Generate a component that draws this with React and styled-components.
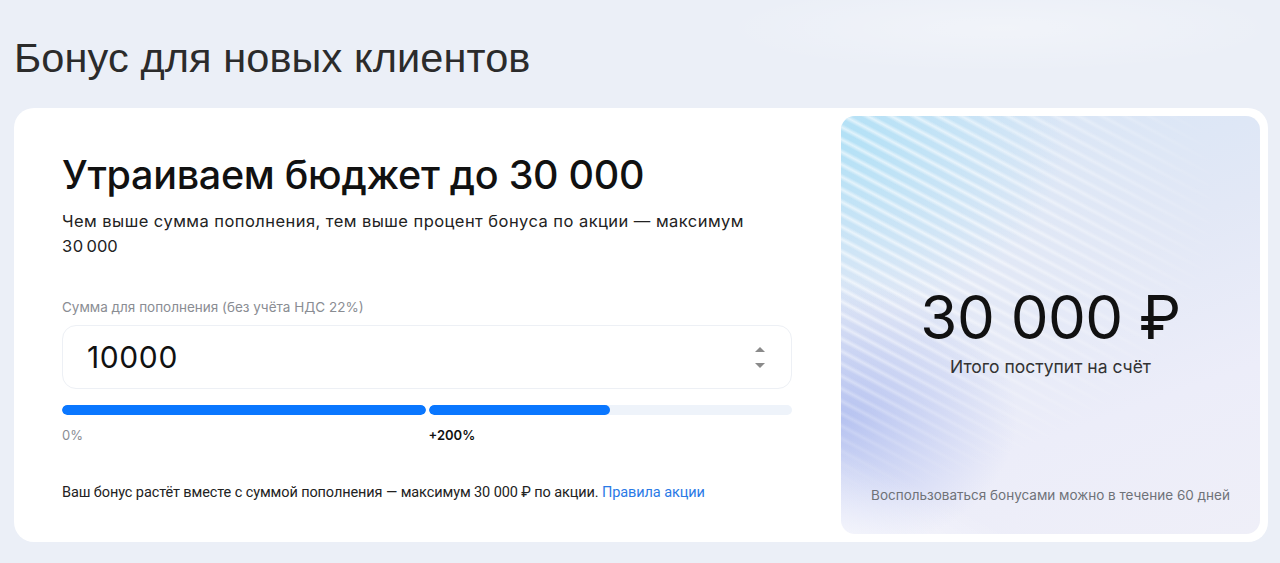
import React from "react";
import styled, { createGlobalStyle } from "styled-components";

const Global = createGlobalStyle`
  html, body { margin: 0; padding: 0; }
  body {
    background: #ebeff7;
    font-family: Inter, "Noto Sans", sans-serif;
    -webkit-font-smoothing: antialiased;
  }
`;

const Page = styled.div`
  position: relative;
  width: 1280px;
  height: 563px;
  box-sizing: border-box;
  padding: 0 12px 0 14px;
  overflow: hidden;
  background:
    radial-gradient(ellipse 380px 60px at 1000px 28px, rgba(255,255,255,0.3), rgba(255,255,255,0) 75%),
    #ebeff7;
`;

const Heading = styled.h1`
  margin: 0;
  padding-top: 31px;
  height: 108px;
  box-sizing: border-box;
  font-family: "Liberation Sans", Arial, sans-serif;
  font-weight: 400;
  font-size: 41.5px;
  line-height: 54px;
  color: #2b2b2b;
  letter-spacing: 0.1px;
`;

const Card = styled.section`
  display: grid;
  grid-template-columns: 1fr 419px;
  height: 434px;
  box-sizing: border-box;
  padding: 8px;
  background: #fff;
  border-radius: 20px;
`;

const Left = styled.div`
  display: flex;
  flex-direction: column;
  padding: 33px 49px 0 40px;
`;

const Title = styled.h2`
  margin: 0;
  font-size: 39.5px;
  font-weight: 500;
  line-height: 52px;
  color: #111;
  letter-spacing: -0.3px;
`;

const Sub = styled.p`
  margin: 8px 0 0;
  font-size: 16.5px;
  line-height: 25px;
  color: #222;
  letter-spacing: 0.45px;
`;

const Label = styled.div`
  margin-top: 39px;
  font-size: 13.5px;
  line-height: 18px;
  color: #8a8d93;
`;

const InputBox = styled.div`
  margin-top: 9px;
  height: 64px;
  box-sizing: border-box;
  border: 1px solid #edf0f5;
  border-radius: 14px;
  display: flex;
  align-items: center;
  justify-content: space-between;
  padding: 0 24px 0 24px;
`;

const Value = styled.span`
  font-size: 30px;
  font-weight: 400;
  color: #111;
  letter-spacing: 0.6px;
`;

const Spinner = styled.div`
  display: flex;
  flex-direction: column;
  gap: 11px;
  align-items: center;
  padding-right: 2px;
`;

const Tri = styled.span`
  width: 0;
  height: 0;
  border-left: 5.5px solid transparent;
  border-right: 5.5px solid transparent;
  ${(p) => (p.$down ? "border-top: 5px solid #8a8a8a;" : "border-bottom: 5px solid #8a8a8a;")}
`;

const Bars = styled.div`
  margin-top: 16px;
  display: grid;
  grid-template-columns: 1fr 1fr;
  gap: 3px;
`;

const Track = styled.div`
  height: 10px;
  border-radius: 5px;
  background: #eef3fa;
  overflow: hidden;
`;

const Fill = styled.div`
  height: 100%;
  border-radius: 5px;
  background: #0a77ff;
`;

const Marks = styled.div`
  margin-top: 12px;
  display: grid;
  grid-template-columns: 1fr 1fr;
  gap: 3px;
  font-size: 13px;
  line-height: 16px;
`;

const Mark = styled.span`
  color: ${(p) => (p.$strong ? "#111" : "#8a8d93")};
  font-weight: ${(p) => (p.$strong ? 600 : 400)};
`;

const Foot = styled.p`
  margin: 41px 0 0;
  font-family: Roboto, "Liberation Sans", sans-serif;
  font-size: 14.5px;
  line-height: 18px;
  color: #222;
  letter-spacing: -0.1px;
`;

const Link = styled.a`
  color: #2a7ae6;
  text-decoration: none;
`;

const Right = styled.div`
  position: relative;
  border-radius: 14px;
  overflow: hidden;
  display: flex;
  flex-direction: column;
  align-items: center;
  background:
    linear-gradient(28deg, rgba(255,255,255,0.55) 0%, rgba(255,255,255,0) 14%),
    radial-gradient(ellipse 220px 170px at 0% 72%, rgba(150,168,236,0.6), rgba(150,168,236,0) 80%),
    radial-gradient(ellipse 280px 220px at 0% 5%, rgba(172,224,246,0.85), rgba(172,224,246,0) 80%),
    linear-gradient(160deg, #d6e5f6 0%, #e2e8f6 40%, #ecedf9 70%, #efeff8 100%);
`;

const Stripes = styled.div`
  position: absolute;
  inset: 0;
  background: repeating-linear-gradient(
    28deg,
    rgba(255,255,255,0) 0px,
    rgba(255,255,255,0) 4px,
    rgba(255,255,255,0.6) 7.5px,
    rgba(255,255,255,0) 11px
  );
  -webkit-mask-image: radial-gradient(ellipse 440px 360px at 8% 22%, #000 25%, transparent 80%);
  mask-image: radial-gradient(ellipse 440px 360px at 8% 22%, #000 25%, transparent 80%);
  pointer-events: none;
`;

const RightContent = styled.div`
  position: relative;
  display: flex;
  flex-direction: column;
  align-items: center;
  height: 100%;
  width: 100%;
`;

const Total = styled.div`
  margin-top: 167px;
  font-size: 60px;
  line-height: 68px;
  font-weight: 400;
  color: #111;
  letter-spacing: -0.5px;
`;

const TotalLabel = styled.div`
  margin-top: 5px;
  font-size: 17.5px;
  line-height: 22px;
  color: #333;
`;

const Note = styled.div`
  margin-top: auto;
  margin-bottom: 30px;
  font-size: 13.5px;
  line-height: 18px;
  color: #6f7278;
`;

export default function App() {
  return (
    <>
      <Global />
      <Page>
        <Heading>Бонус для новых клиентов</Heading>
        <Card>
          <Left>
            <Title>Утраиваем бюджет до 30 000</Title>
            <Sub>
              Чем выше сумма пополнения, тем выше процент бонуса по акции — максимум 30{"\u202F"}000
            </Sub>
            <Label>Сумма для пополнения (без учёта НДС 22%)</Label>
            <InputBox>
              <Value>10000</Value>
              <Spinner>
                <Tri />
                <Tri $down />
              </Spinner>
            </InputBox>
            <Bars>
              <Track>
                <Fill style={{ width: "100%" }} />
              </Track>
              <Track>
                <Fill style={{ width: "50%" }} />
              </Track>
            </Bars>
            <Marks>
              <Mark>0%</Mark>
              <Mark $strong>+200%</Mark>
            </Marks>
            <Foot>
              Ваш бонус растёт вместе с суммой пополнения — максимум 30 000 ₽ по акции.{" "}
              <Link href="#">Правила акции</Link>
            </Foot>
          </Left>
          <Right>
            <Stripes />
            <RightContent>
              <Total>30 000 ₽</Total>
              <TotalLabel>Итого поступит на счёт</TotalLabel>
              <Note>Воспользоваться бонусами можно в течение 60 дней</Note>
            </RightContent>
          </Right>
        </Card>
      </Page>
    </>
  );
}
